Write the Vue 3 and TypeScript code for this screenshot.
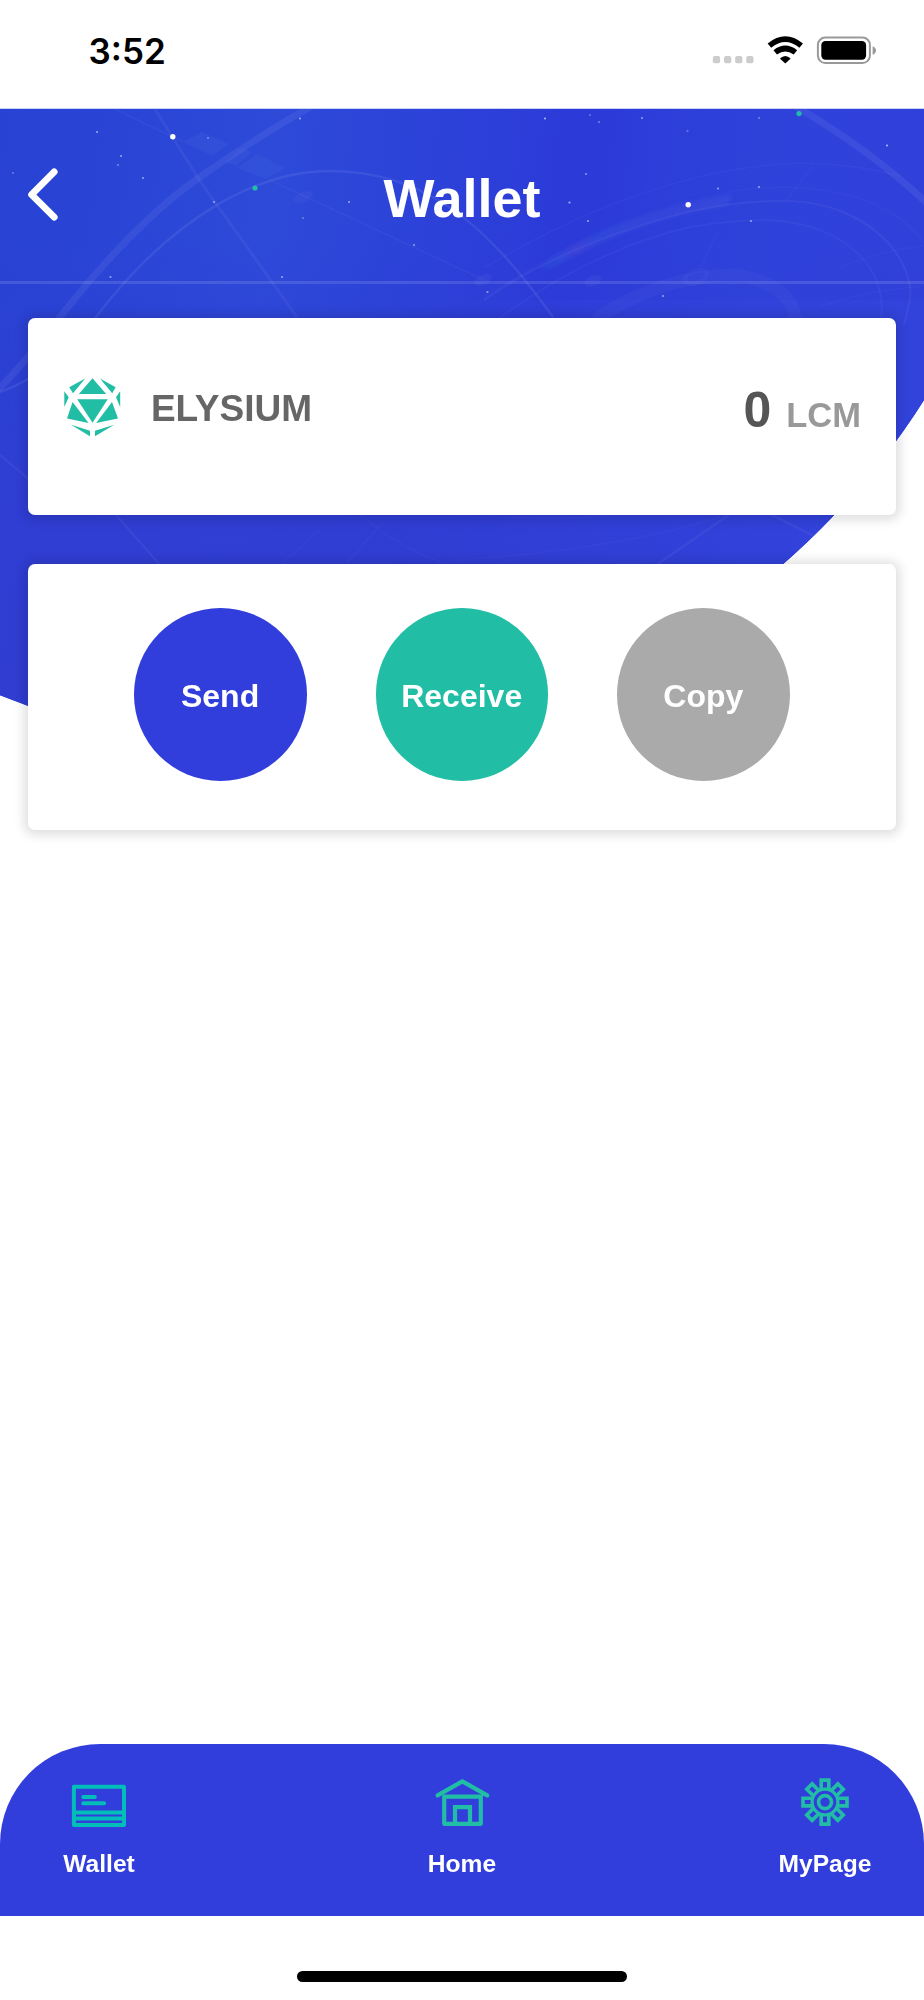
<script setup lang="ts">
interface Star {
  x: number
  y: number
  r: number
  o: number
}

interface Action {
  label: string
  tone: string
}

const toStar = ([x, y, o]: number[]): Star => ({ x, y, r: 1.1, o })

const stars: Star[] = [
  [97, 132, 0.5], [121, 156, 0.5], [118, 165, 0.35], [143, 178, 0.5], [13, 173, 0.3],
  [208, 138, 0.35], [300, 118.5, 0.5], [214, 202, 0.5], [349, 202, 0.5], [303, 218, 0.3],
  [110.5, 277, 0.5], [282, 277, 0.5], [414, 245, 0.45], [545, 118.5, 0.6], [590, 115, 0.3],
  [599, 122, 0.35], [642, 118, 0.5], [687.5, 131, 0.3], [759, 118, 0.35], [887, 145.5, 0.6],
  [586, 174, 0.45], [569.5, 202.5, 0.6], [588, 221, 0.5], [718, 188.5, 0.5], [759, 187, 0.5],
  [751, 221, 0.5], [487.5, 292, 0.5], [663, 296, 0.5],
].map(toStar)

const actions: Action[] = [
  { label: 'Send', tone: 'send' },
  { label: 'Receive', tone: 'receive' },
  { label: 'Copy', tone: 'copy' },
]

const teeth: number[] = [0, 45, 90, 135, 180, 225, 270, 315]
</script>

<template>
  <div class="screen">
    <svg class="backdrop" width="924" height="760" viewBox="0 0 924 760" aria-hidden="true">
      <defs>
        <linearGradient id="sky" gradientUnits="userSpaceOnUse" x1="0" y1="150" x2="924" y2="260">
          <stop offset="0" stop-color="#2842d3" />
          <stop offset="0.3" stop-color="#2d4ad9" />
          <stop offset="0.62" stop-color="#2c3ad8" />
          <stop offset="0.8" stop-color="#2e42da" />
          <stop offset="1" stop-color="#3041da" />
        </linearGradient>
        <linearGradient id="dusk" gradientUnits="userSpaceOnUse" x1="0" y1="240" x2="0" y2="700">
          <stop offset="0" stop-color="#303dd3" stop-opacity="0" />
          <stop offset="0.6" stop-color="#303dd3" stop-opacity="0.9" />
          <stop offset="1" stop-color="#303dd0" />
        </linearGradient>
        <linearGradient id="dawn" gradientUnits="userSpaceOnUse" x1="400" y1="0" x2="900" y2="0">
          <stop offset="0" stop-color="#3243dc" stop-opacity="0" />
          <stop offset="1" stop-color="#3243dc" />
        </linearGradient>
        <linearGradient id="comet" gradientUnits="userSpaceOnUse" x1="535" y1="268" x2="735" y2="194">
          <stop offset="0" stop-color="#2f7ae0" stop-opacity="0" />
          <stop offset="0.12" stop-color="#2f66df" stop-opacity="0.35" />
          <stop offset="0.2" stop-color="#5f52d8" stop-opacity="0.35" />
          <stop offset="0.34" stop-color="#3a62e0" stop-opacity="0.3" />
          <stop offset="0.6" stop-color="#5a68e4" stop-opacity="0.16" />
          <stop offset="1" stop-color="#6f7fe8" stop-opacity="0.14" />
        </linearGradient>
        <filter id="soft" x="-10%" y="-20%" width="120%" height="140%">
          <feGaussianBlur stdDeviation="2" />
        </filter>
        <clipPath id="sheet">
          <path d="M0 108.7H924V760H0z" />
        </clipPath>
        <clipPath id="disc">
          <circle cx="285" cy="-6.7" r="757.5" />
        </clipPath>
      </defs>
      <g clip-path="url(#sheet)">
        <circle cx="285" cy="-6.7" r="757.5" fill="url(#sky)" />
        <circle cx="285" cy="-6.7" r="757.5" fill="url(#dusk)" />
        <path d="M400 300H924V760H400z" fill="url(#dawn)" clip-path="url(#disc)" />
        <g clip-path="url(#disc)" fill="none" stroke="#b0b4f8">
          <path d="M-10 398Q28 360 60 317Q135 222 200 177T312 106" stroke-width="7" opacity=".1" />
          <path d="M0 392Q50 375 96 317C170 220 255 171 330 171C430 171 490 230 553 317" stroke-width="2.4" opacity=".12" />
          <path d="M153 106L202 184L297 317" stroke-width="3" opacity=".08" />
          <path d="M115 109L183 142M270 180L484 280" stroke-width="1.5" opacity=".06" />
          <path d="M795 106Q872 151 930 206" stroke-width="7" opacity=".11" />
          <path d="M484 300Q562 245 687 212Q740 200 790 201C870 204 915 260 910 300L904 325" stroke-width="2.2" opacity=".08" />
          <path d="M490 325Q590 250 690 227Q730 220 770 220C840 224 892 265 880 325" stroke-width="1.8" opacity=".06" />
          <path d="M484 268Q640 175 780 164Q840 160 900 176" stroke-width="1.5" opacity=".05" />
          <path d="M484 296L560 252M728 192Q800 180 860 198Q905 215 924 243" stroke-width="1.5" opacity=".04" />
          <path d="M595 320Q660 275 735 275Q790 282 796 320" stroke-width="13" opacity=".045" />
          <ellipse cx="696" cy="277" rx="11" ry="6" stroke-width="5" opacity=".04" transform="rotate(-20 696 277)" />
          <path d="M813 166L786 201M717 232L700 270M840 268Q880 250 924 246M820 306Q870 290 924 286" stroke-width="1.6" opacity=".04" />
          <path d="M0 455L32 482M115 514L160 565M655 566L730 514M770 514L816 537" stroke-width="2.4" opacity=".08" />
          <path d="M360 514Q395 545 440 562M455 560Q620 550 730 514M280 565L320 530M345 565L385 520M510 517Q560 521 610 515" stroke-width="2" opacity=".035" />
        </g>
        <path d="M183 142L202 132L229 144L212 156zM237 168L257 154L285 168L266 179zM225 162L242 147L252 152L236 166z" fill="#5e86ea" opacity=".12" />
        <g fill="#8088ea" opacity=".1">
          <ellipse cx="303" cy="197" rx="10" ry="5" transform="rotate(-20 303 197)" />
          <ellipse cx="483" cy="280" rx="9" ry="5" transform="rotate(-25 483 280)" />
          <ellipse cx="593" cy="281" rx="9" ry="5" transform="rotate(-20 593 281)" />
        </g>
        <path d="M536 268Q620 210 733 194L726 206Q640 218 548 270z" fill="url(#comet)" filter="url(#soft)" />
        <circle v-for="(s, i) in stars" :key="i" :cx="s.x" :cy="s.y" :r="s.r" fill="#fff" :opacity="s.o" />
        <circle cx="172.8" cy="136.8" r="2.7" fill="#fff" />
        <circle cx="688.2" cy="204.8" r="2.7" fill="#fff" />
        <circle cx="255" cy="188" r="2.6" fill="#22bda8" />
        <circle cx="799" cy="113.6" r="2.6" fill="#22bda8" />
      </g>
    </svg>

    <div class="status">
      <span class="time">3:52</span>
      <svg width="168" height="32" viewBox="0 0 168 32" aria-hidden="true">
        <g fill="#ccc">
          <rect x="2.8" y="22" width="7.3" height="7.3" rx="2" />
          <rect x="14" y="22" width="7.3" height="7.3" rx="2" />
          <rect x="25.1" y="22" width="7.3" height="7.3" rx="2" />
          <rect x="36.2" y="22" width="7.3" height="7.3" rx="2" />
        </g>
        <g fill="none" stroke="#000" stroke-width="5.6">
          <path d="M59.4 11.6Q75.3 -1.4 91.2 11.6" />
          <path d="M65.2 18.4Q75.3 10.6 85.4 18.4" />
        </g>
        <path d="M75.3 29.6L69.9 24.4Q75.3 19.4 80.7 24.4z" />
        <rect x="107.9" y="3.6" width="52" height="25.4" rx="7.4" fill="#fff" stroke="#999" stroke-width="2" />
        <rect x="111.3" y="7" width="44.8" height="18.8" rx="4.2" />
        <path d="M162.6 12.3Q166 13.7 166 16.5T162.6 20.7z" fill="#999" />
      </svg>
    </div>

    <header class="header">
      <svg class="back" width="36" height="60" viewBox="0 0 36 60" aria-label="Back">
        <path d="M26.2 7.8L3.6 30.7L26.2 53.2" fill="none" stroke="#fff" stroke-width="6.8" stroke-linecap="round" stroke-linejoin="round" />
      </svg>
      <h1 class="title">Wallet</h1>
    </header>

    <main class="content">
      <section class="card balance">
        <svg class="gem" width="58" height="60" viewBox="0 0 58 60" fill="#22bda5" aria-hidden="true">
          <path d="M28.5 1.2L42.2 17.1H14.9zM13.2 22.3H43.7L28.5 45.8z" />
          <path d="M21.2 1.5L5.2 10.3L9 16.2zM36 1.5L51.7 10.3L48.2 16.2z" />
          <path d="M.3 14.3L4.7 20.3L.3 30zM56.2 14.3L52 20.3L56.2 30z" />
          <path d="M8.6 25L24.6 46L3 41.5zM48 25L32.2 46L54 41.5z" />
          <path d="M7 47.8L26 53.7V59.3zM50.2 47.8L31 53.7V59.3z" />
        </svg>
        <span class="name">ELYSIUM</span>
        <span class="funds">
          <span class="amount">0</span>
          <span class="unit">LCM</span>
        </span>
      </section>

      <section class="card actions">
        <button v-for="a in actions" :key="a.label" type="button" class="action" :class="a.tone">{{ a.label }}</button>
      </section>
    </main>

    <nav class="tabs">
      <a class="tab">
        <svg width="60" height="56" viewBox="0 0 60 56" fill="none" stroke="#02beb9" stroke-width="4" stroke-linecap="round" stroke-linejoin="round" aria-hidden="true">
          <path d="M4.9 9.7H55V48H4.9zM5 35.4H55M5 41.6H55M14.2 20H25.8M14.2 26.3H35.2" />
        </svg>
        <span>Wallet</span>
      </a>
      <a class="tab">
        <svg width="60" height="56" viewBox="0 0 60 56" fill="none" stroke="#22bda5" stroke-width="4.2" stroke-linecap="round" stroke-linejoin="round" aria-hidden="true">
          <path d="M5.6 18.4L30.4 4.4L55.2 18.4M12.2 19.6H48.8V46.8H12.2z" />
          <path d="M23 46V30.2H38V46" stroke-linejoin="miter" stroke-linecap="butt" />
        </svg>
        <span>Home</span>
      </a>
      <a class="tab">
        <svg width="60" height="56" viewBox="0 0 60 56" fill="none" stroke="#22bda5" stroke-width="3.6" aria-hidden="true">
          <circle cx="30" cy="25.1" r="12.9" stroke-width="3.2" />
          <circle cx="30" cy="25.1" r="6.5" stroke-width="3.6" />
          <path v-for="t in teeth" :key="t" d="M26.2 12.1V3.1H33.8V12.1" :transform="`rotate(${t} 30 25.1)`" />
        </svg>
        <span>MyPage</span>
      </a>
    </nav>

    <footer class="bottom"><div class="indicator"></div></footer>
  </div>
</template>

<style>
body {
  margin: 0;
  background: #fff;
}
</style>

<style scoped>
.screen {
  position: relative;
  display: flex;
  flex-direction: column;
  width: 924px;
  height: 2000px;
  overflow: hidden;
  background: #fff;
  font-family: "Liberation Sans", Arial, sans-serif;
  font-weight: 700;
}
.backdrop {
  position: absolute;
  inset: 0 auto auto 0;
}
.status,
.header,
.content,
.tabs,
.bottom {
  position: relative;
  box-sizing: border-box;
  flex: none;
}
.status {
  display: flex;
  align-items: flex-start;
  justify-content: space-between;
  height: 109px;
  padding: 34px 46px 0 88.5px;
}
.time {
  font: 600 35px/34px Inter, sans-serif;
  color: #000;
}
.header {
  display: grid;
  grid-template-columns: 120px 1fr 120px;
  align-items: start;
  height: 174.5px;
  border-bottom: 3px solid rgba(255, 255, 255, 0.12);
}
.back {
  margin: 55px 0 0 28px;
}
.title {
  margin: 59px 0 0;
  font-size: 54px;
  line-height: 60px;
  text-align: center;
  color: #fff;
}
.content {
  display: flex;
  flex-direction: column;
  gap: 49px;
  height: 1460.5px;
  padding: 34.5px 28px 0 28.4px;
}
.card {
  box-sizing: border-box;
  display: flex;
  background: #fff;
  border-radius: 7px;
  box-shadow: 0 1px 11px 4px rgba(0, 0, 0, 0.13);
}
.balance {
  align-items: flex-start;
  height: 197px;
  padding: 59px 35px 0 35.5px;
}
.name {
  margin: 9px 0 0 29px;
  font-size: 37px;
  line-height: 46px;
  color: #666;
}
.funds {
  display: flex;
  align-items: baseline;
  margin: 5px 0 0 auto;
}
.amount {
  font-size: 50px;
  line-height: 56px;
  color: #555;
}
.unit {
  margin-left: 15px;
  font-size: 34.5px;
  color: #999;
}
.actions {
  justify-content: center;
  gap: 69px;
  height: 266px;
  padding-top: 44px;
}
.action {
  width: 172.6px;
  height: 172.6px;
  padding: 3px 1px 0 0;
  border: 0;
  border-radius: 50%;
  font: 700 32px/36px "Liberation Sans", Arial, sans-serif;
  color: #fff;
}
.send {
  background: #323edb;
}
.receive {
  background: #22bda5;
}
.copy {
  background: #aaa;
}
.tabs {
  display: flex;
  justify-content: space-between;
  height: 172px;
  padding: 33px 39px 0;
  border-radius: 100px 100px 0 0;
  background: #323edb;
}
.tab {
  display: flex;
  flex-direction: column;
  align-items: center;
  width: 120px;
  font-size: 24.6px;
  line-height: 28px;
  color: #fff;
}
.tab span {
  margin-top: 17px;
}
.bottom {
  display: flex;
  justify-content: center;
  height: 84px;
  padding-top: 55px;
}
.indicator {
  width: 330px;
  height: 11px;
  border-radius: 5.5px;
  background: #000;
}
</style>
